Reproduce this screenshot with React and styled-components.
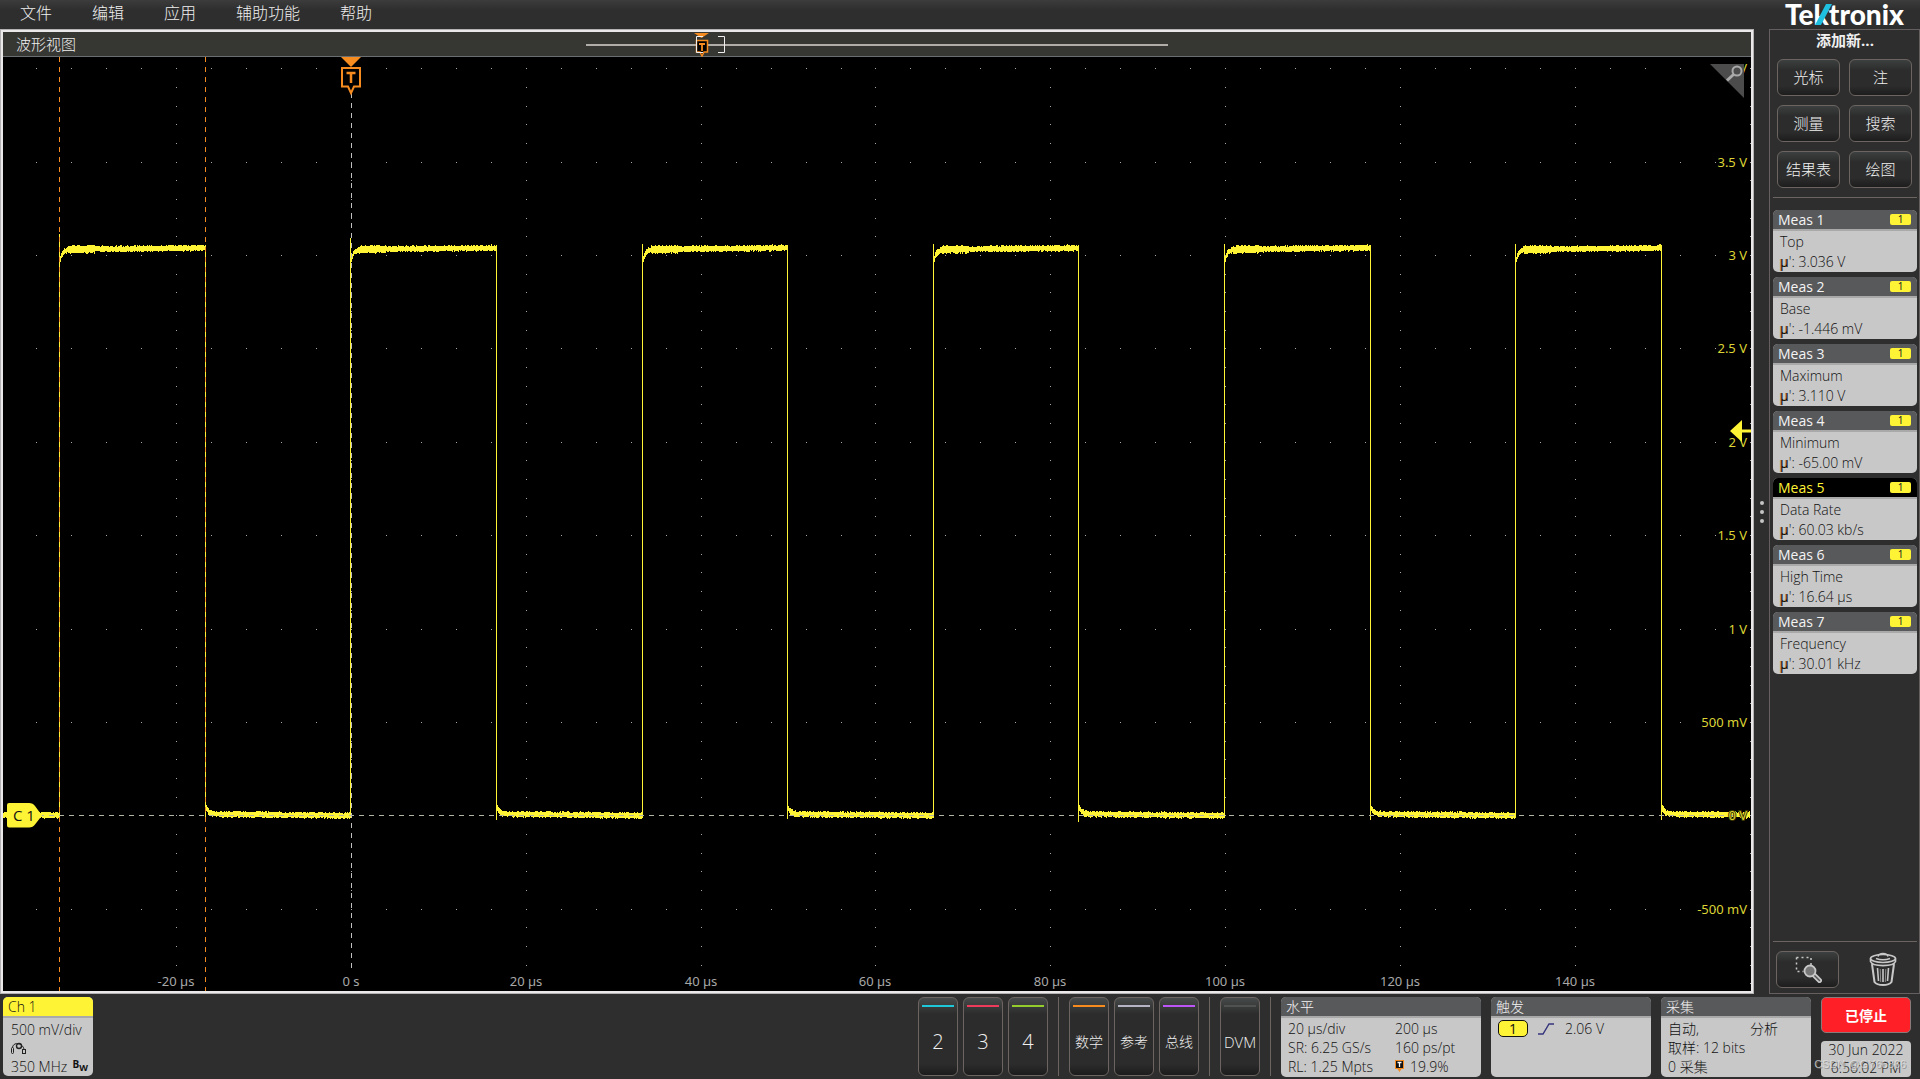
import React from 'react'
import styled, { createGlobalStyle } from 'styled-components'

const colors = {
  bg: '#2e2e2e',
  panel: '#363633',
  yellow: '#fff335',
  orange: '#f68b1f',
  card: '#c8c8c8',
  cardHeader: '#58595b',
  frame: '#6b6460',
}

const GlobalStyle = createGlobalStyle`
  * {
    box-sizing: border-box;
  }
  body {
    margin: 0;
    background: ${colors.bg};
    color: #f0f0f0;
    font-family: 'Open Sans', 'Noto Sans CJK SC', sans-serif;
    font-size: 14px;
    font-weight: 300;
  }
  button {
    font: inherit;
    color: inherit;
    cursor: pointer;
    padding: 0;
  }
`

const Page = styled.div`
  display: flex;
  flex-direction: column;
  min-height: 100vh;
`

const TopBar = styled.header`
  display: flex;
  justify-content: space-between;
  height: 29px;
  padding-right: 14px;
  background: linear-gradient(#3c3c3c, ${colors.bg} 10px);
`

const Menu = styled.nav`
  display: flex;
  gap: 8px;
  padding-left: 4px;
`

const MenuItem = styled.button`
  border: 0;
  background: none;
  padding: 0 16px 3px;
  font-size: 16px;
  line-height: 26px;
`

const Main = styled.main`
  display: flex;
  flex: 1;
`

const WaveView = styled.section`
  flex: 1;
  min-width: 0;
  background: #000;
  border: 3px solid #ebe8ea;
  outline: 1px solid #b5b2b4;
  outline-offset: -1px;
`

const WaveHeader = styled.div`
  display: grid;
  grid-template-columns: 33% 1fr;
  height: 25px;
  background: ${colors.panel};
  border-bottom: 1px solid #6a6e70;
`

const WaveTitle = styled.h1`
  margin: 0;
  padding-left: 13px;
  font-size: 15px;
  font-weight: 300;
  line-height: 25px;
`

const PlotArea = styled.div`
  position: relative;

  > svg {
    display: block;
    width: 100%;
    height: auto;
  }
`

const AxisText = styled.text`
  font-family: 'Noto Sans', sans-serif;
  font-size: 13px;
  font-weight: 400;
  fill: ${(props) => (props.$volt ? '#dcd334' : '#a8a8a8')};
`

const ZoomCorner = styled.button`
  position: absolute;
  top: 7px;
  right: 7px;
  border: 0;
  background: none;
  line-height: 0;
`

const Splitter = styled.div`
  display: flex;
  flex-direction: column;
  align-items: center;
  justify-content: center;
  gap: 5px;
  width: 15px;
`

const Dot = styled.span`
  width: 4px;
  height: 4px;
  border-radius: 50%;
  background: #c4c4c4;
`

const Sidebar = styled.aside`
  display: flex;
  flex-direction: column;
  width: 151px;
  padding: 0 2px 5px 3px;
  border: 1px solid #65605f;
`

const SideTitle = styled.h2`
  margin: 0 0 9px;
  font-size: 15px;
  font-weight: 700;
  line-height: 20px;
  text-align: center;
`

const ButtonGrid = styled.div`
  display: grid;
  grid-template-columns: 1fr 1fr;
  gap: 9px;
  padding: 0 5px 0 4px;
`

const PanelButton = styled.button`
  display: flex;
  align-items: center;
  justify-content: center;
  height: 37px;
  padding-bottom: 2px;
  border: 1px solid ${colors.frame};
  border-radius: 6px;
  background: linear-gradient(#3d4040, #2c2c2c 10px, #2c2c2c 26px, #1d1d1d);
  font-size: 15px;
`

const Rule = styled.hr`
  width: 100%;
  height: 1px;
  margin: ${(props) => props.$margin};
  border: 0;
  background: ${colors.frame};
`

const MeasList = styled.div`
  display: flex;
  flex-direction: column;
  gap: 5px;
`

const Card = styled.section`
  width: ${(props) => props.$width ?? 'auto'};
  border-radius: 5px;
  overflow: hidden;
  background: ${colors.card};
  color: #111;
`

const CardHeader = styled.div`
  display: flex;
  align-items: center;
  justify-content: space-between;
  height: 21px;
  padding: 0 6px 0 5px;
  border-bottom: 2px solid #a9a9a9;
  background: ${(props) => props.$bg ?? colors.cardHeader};
  color: ${(props) => props.$color ?? '#f4f4f4'};
  line-height: 19px;
`

const MeasHeader = styled(CardHeader)`
  font-weight: 400;
`

const MeasBody = styled.div`
  padding: 1px 7px 0;
  height: 41px;
  line-height: 20px;
`

const Mu = styled.b`
  font-family: 'Noto Sans', sans-serif;
  font-weight: 400;
  text-shadow: -1px 0 rgba(200, 110, 20, 0.7);
`

const SourceBadge = styled.span`
  width: 21px;
  height: 11px;
  border-radius: 2px;
  background: ${colors.yellow};
  color: #222;
  font-family: 'Noto Sans', sans-serif;
  font-size: 10px;
  line-height: 11px;
  text-align: center;
`

const SideTools = styled.div`
  display: grid;
  grid-template-columns: 63px 1fr;
  padding-left: 3px;
`

const TrashButton = styled.button`
  justify-self: center;
  border: 0;
  margin-left: 9px;
  background: none;
  line-height: 0;
`

const BottomBar = styled.footer`
  position: relative;
  display: flex;
  align-items: flex-start;
  height: 85px;
  padding: 3px 9px 0 3px;
`

const Group = styled.div`
  display: flex;
  gap: 5px;
  height: 79px;
  padding: 0 10px;
  border-right: 1px solid ${colors.frame};
`

const SettingsBar = styled.div`
  display: flex;
  margin-left: auto;
`

const SlotButton = styled.button`
  display: flex;
  flex-direction: column;
  align-items: center;
  width: 40px;
  border: 1px solid ${colors.frame};
  border-radius: 6px;
  background: linear-gradient(#474a4a, #2c2c2c 16px, #2c2c2c 66px, #1c1c1c);
  font-size: ${(props) => props.$size ?? '14px'};
  line-height: 70px;
  white-space: nowrap;

  &::before {
    content: '';
    flex: none;
    width: 32px;
    height: 2px;
    margin-top: 7px;
    background: ${(props) => props.$color};
  }
`

const SettingCards = styled.div`
  display: flex;
  gap: 10px;
  padding-left: 10px;
`

const CardBody = styled.div`
  display: grid;
  grid-template-columns: ${(props) => props.$columns ?? '1fr'};
  align-content: start;
  height: 58px;
  padding: 1px 7px 0;
  line-height: 19px;
`

const WideCell = styled.span`
  grid-column: 1 / -1;
`

const WithIcon = styled.span`
  display: flex;
  align-items: center;
  gap: ${(props) => props.$gap};
`

const ChannelBody = styled.div`
  display: flex;
  flex-direction: column;
  justify-content: space-between;
  height: 58px;
  padding: 3px 5px 0 8px;
  line-height: 18px;
`

const ChannelLine = styled.div`
  display: flex;
  justify-content: space-between;
  white-space: nowrap;
`

const Bandwidth = styled.b`
  font-size: 10px;
  font-weight: 700;
  line-height: 12px;

  sub {
    font-size: 9px;
    line-height: 0;
  }
`

const TriggerBadge = styled.span`
  width: 30px;
  height: 17px;
  border: 1px solid #111;
  border-radius: 5px;
  background: ${colors.yellow};
  font-weight: 400;
  line-height: 15px;
  text-align: center;
`

const StatusColumn = styled.div`
  display: grid;
  gap: 8px;
  width: 90px;
  margin-left: 10px;
`

const RunButton = styled.button`
  height: 36px;
  border: 1px solid #8a7a7a;
  border-radius: 5px;
  background: #ff2027;
  color: #fff;
  font-size: 14px;
  font-weight: 700;
`

const Clock = styled.time`
  height: 36px;
  border-radius: 4px;
  background: ${colors.card};
  color: #111;
  line-height: 18px;
  text-align: center;
`

const Watermark = styled.span`
  position: absolute;
  right: 14px;
  bottom: 8px;
  color: rgba(225, 225, 225, 0.75);
  font: 400 11px/14px 'Liberation Sans', sans-serif;
  text-shadow: 1px 1px rgba(110, 110, 110, 0.6);
`

// plot scales, in viewBox units
const PLOT_W = 1748
const PLOT_H = 934
const timeX = (us) => Math.round(347.9 + us * 8.743)
const voltY = (v) => Math.round(758.2 - v * 186.7)

const random = (seed) => {
  let s = seed
  return () => {
    s = (s * 16807) % 2147483647
    return s / 2147483647
  }
}

const gridDots = () => {
  let d = ''
  for (let v = -0.5; v <= 4; v += 0.5) {
    if (v === 0) continue
    for (let us = -36; us <= 160; us += 4) {
      d += `M${timeX(us)} ${voltY(v)}h1`
    }
  }
  for (let us = -20; us <= 160; us += 20) {
    for (let i = us === 160 ? -9 : -8; i <= 40; i++) {
      d += `M${timeX(us)} ${voltY(i / 10)}h1`
    }
  }
  return d
}

const tracePath = () => {
  const next = random(42)
  const edges = []
  for (let k = -2; k < 10; k++) {
    edges.push({
      x: Math.floor(347.9 + k * 145.6),
      rising: k % 2 === 0,
      peak: k === -2 ? 177 : k === 0 ? 181 : 187,
    })
  }
  let d = ''
  let edge = null
  let e = 0
  for (let x = 0; x < PLOT_W - 1; x++) {
    if (e < edges.length && x === edges[e].x) {
      edge = edges[e++]
      d += edge.rising ? `M${x} ${edge.peak}V761` : `M${x} 188V${762 + Math.round(next() * 3)}`
      continue
    }
    const age = edge ? x - edge.x : 99
    const high = edge?.rising
    const settle = Math.exp(-age / 2.5)
    const center = high ? 192.5 - age / 90 + settle * 14 : 757 + Math.min(age, 140) / 90 - settle * 9
    const half = 2 + (high && age > 8 && age < 36 ? 1 : 0)
    const top = Math.round(center - half - next() * 1.6)
    const bottom = Math.round(center + half + next() * 1.6)
    d += `M${x} ${top}V${bottom}`
  }
  return d
}

const DOTS = gridDots()
const TRACE = tracePath()

const voltLabels = [
  [4, '4 V'],
  [3.5, '3.5 V'],
  [3, '3 V'],
  [2.5, '2.5 V'],
  [2, '2 V'],
  [1.5, '1.5 V'],
  [1, '1 V'],
  [0.5, '500 mV'],
  [0, '0 V'],
  [-0.5, '-500 mV'],
]

const timeLabels = [-20, 0, 20, 40, 60, 80, 100, 120, 140]

const Plot = () => (
  <svg viewBox={`0 0 ${PLOT_W} ${PLOT_H}`} role="img" aria-label="Ch 1">
    <g fill="none" shapeRendering="crispEdges">
      <path d={DOTS} stroke="#a8a8a8" transform="translate(0 .5)" />
      <path d={TRACE} stroke={colors.yellow} transform="translate(.5 0)" />
      <path d="M56.5 0V934M202.5 0V934" stroke={colors.orange} strokeDasharray="5 5" />
      <path d="M348.5 36V911" stroke="#c0c0c0" strokeDasharray="5 5" />
      <path d="M36 758.5H1744" stroke="#b4b4a4" strokeDasharray="5 5" />
    </g>
    {voltLabels.map(([v, label]) => (
      <AxisText
        key={label}
        $volt
        x={1744}
        y={voltY(v) + 5}
        textAnchor="end"
        stroke={v === 0 ? '#3a3800' : 'none'}
        strokeWidth="2"
        paintOrder="stroke"
      >
        {label}
      </AxisText>
    ))}
    {timeLabels.map((us) => (
      <AxisText key={us} x={timeX(us)} y={929} textAnchor="middle">
        {us === 0 ? '0 s' : `${us} µs`}
      </AxisText>
    ))}
    <path d="M338 0h20l-10 10z" fill={colors.orange} />
    <path
      d="M339 11h18v18.500h-6l-3 6.500l-3-6.500h-6z"
      fill="#000"
      stroke={colors.orange}
      strokeWidth="2"
    />
    <path d="M343.500 16h9M348 16v10" stroke={colors.orange} strokeWidth="2.500" />
    <path d="M1727 374l12-11v9.500h9v3h-9v9.500z" fill={colors.yellow} />
    <path d="M6 746h20q4 0 6 3l7 9.500l-7 9q-2 3-6 3H6q-2 0-2-2V748q0-2 2-2z" fill={colors.yellow} />
    <text x="10" y="764" fontSize="15" fontWeight="400" fill="#111">
      C 1
    </text>
  </svg>
)

const Overview = () => (
  <svg width="600" height="25" fill="none">
    <path d="M6 13h582" stroke="#b0aca8" strokeWidth="2" />
    <path d="M114 1h15l-7.500 5z" fill={colors.orange} />
    <path d="M116.500 8.500h11v11.500h-3.500l-2 4l-2-4h-3.500z" fill="#000" stroke={colors.orange} strokeWidth="1.500" />
    <path d="M119 12h6M122 12v7" stroke={colors.orange} strokeWidth="1.800" />
    <path d="M123 4.500h-6.500v16h6.500M138 4.500h6.500v16h-6.500" stroke="#eee" />
  </svg>
)

const Logo = () => (
  <svg width="122" height="29" overflow="visible" role="img" aria-label="Tektronix">
    <text x="1" y="25" fontFamily="Lato" fontWeight="900" fontSize="28" fill="#fff">
      Tektronix
    </text>
    <path d="M42 4h6L37 25h-6z" fill="#1fbfe0" />
  </svg>
)

const CornerIcon = () => (
  <svg width="34" height="34" fill="none">
    <path d="M0 0h34v34z" fill="#4c4c4c" />
    <circle cx="27" cy="7" r="4.500" stroke="#aaa" strokeWidth="2" />
    <path d="M23.500 10.500L17 16.500" stroke="#aaa" strokeWidth="3" />
  </svg>
)

const ZoomAreaIcon = () => (
  <svg width="28" height="28" fill="none">
    <path d="M2.500 2.500h14.500v8M2.500 2.500v14h7" stroke="#c8c8c8" strokeWidth="1.500" strokeDasharray="2 3" />
    <path d="M20.500 20.500l5 5" stroke="#c8c8c8" strokeWidth="5" strokeLinecap="round" />
    <path d="M20.500 20.500l5 5" stroke="#555" strokeWidth="1.500" strokeLinecap="round" />
    <circle cx="16" cy="16" r="5.500" fill="#777" stroke="#c8c8c8" strokeWidth="1.800" />
  </svg>
)

const TrashIcon = () => (
  <svg width="30" height="36" fill="none" stroke="#c8c8c8" strokeWidth="1.600">
    <ellipse cx="15" cy="6.500" rx="12.500" ry="4" />
    <path d="M2.500 6.500v3c2 5.500 23 5.500 25 0v-3" />
    <path d="M10 4.500c1-4 9-4 10 0M8 6.500c4 1.500 10 1.500 14 0" />
    <path d="M4 12l2.500 18c3 4 14 4 17 0L26 12" strokeWidth="2" />
    <path d="M9.500 16l1 13M15 17v13M20.500 16l-1 13" />
    <path d="M12.200 17l.5 13M17.800 17l-.5 13" strokeWidth="1" opacity=".6" />
  </svg>
)

const ProbeIcon = () => (
  <svg width="16" height="13" fill="none" stroke="#222">
    <rect x=".5" y="5.500" width="2" height="6" rx="1" />
    <rect x="11.500" y="7.500" width="3" height="4" />
    <path d="M1.500 5.500C2 0 11 0 13 7" />
    <circle cx="8" cy="4" r="2.500" strokeWidth="1.400" />
  </svg>
)

const SlopeIcon = () => (
  <svg width="17" height="12" fill="none" stroke="#34347c" strokeWidth="1.400">
    <path d="M0 11h5L11 1h5" />
  </svg>
)

const TriggerIcon = () => (
  <svg width="9" height="13" fill="none">
    <path d="M0 0h9v9H6.500L4.500 12L2.500 9H0z" fill={colors.orange} />
    <path d="M1 1h7v7H1z" fill="#111" />
    <path d="M2.500 2.500h4M4.500 2v5" stroke="#fff" strokeWidth="1.300" />
  </svg>
)

const measurements = [
  ['Top', '3.036 V'],
  ['Base', '-1.446 mV'],
  ['Maximum', '3.110 V'],
  ['Minimum', '-65.00 mV'],
  ['Data Rate', '60.03 kb/s'],
  ['High Time', '16.64 µs'],
  ['Frequency', '30.01 kHz'],
]

const Measurement = ({ index, name, value, selected }) => (
  <Card>
    <MeasHeader
      $bg={selected ? '#000' : undefined}
      $color={selected ? colors.yellow : undefined}
    >
      Meas {index}
      <SourceBadge>1</SourceBadge>
    </MeasHeader>
    <MeasBody>
      {name}
      <br />
      <Mu>µ</Mu>&#39;: {value}
    </MeasBody>
  </Card>
)

const App = () => (
  <Page>
    <GlobalStyle />
    <TopBar>
      <Menu>
        {['文件', '编辑', '应用', '辅助功能', '帮助'].map((item) => (
          <MenuItem key={item}>{item}</MenuItem>
        ))}
      </Menu>
      <Logo />
    </TopBar>

    <Main>
      <WaveView>
        <WaveHeader>
          <WaveTitle>波形视图</WaveTitle>
          <Overview />
        </WaveHeader>
        <PlotArea>
          <Plot />
          <ZoomCorner aria-label="缩放">
            <CornerIcon />
          </ZoomCorner>
        </PlotArea>
      </WaveView>
      <Splitter>
        <Dot />
        <Dot />
        <Dot />
      </Splitter>
      <Sidebar>
        <SideTitle>添加新...</SideTitle>
        <ButtonGrid>
          {['光标', '注', '测量', '搜索', '结果表', '绘图'].map((label) => (
            <PanelButton key={label}>{label}</PanelButton>
          ))}
        </ButtonGrid>
        <Rule $margin="9px 0 12px" />
        <MeasList>
          {measurements.map(([name, value], i) => (
            <Measurement key={name} index={i + 1} name={name} value={value} selected={i === 4} />
          ))}
        </MeasList>
        <Rule $margin="auto 0 9px" />
        <SideTools>
          <PanelButton aria-label="缩放">
            <ZoomAreaIcon />
          </PanelButton>
          <TrashButton aria-label="删除">
            <TrashIcon />
          </TrashButton>
        </SideTools>
      </Sidebar>
    </Main>

    <BottomBar>
      <Card $width="90px">
        <CardHeader $bg={colors.yellow} $color="#111">
          Ch 1
        </CardHeader>
        <ChannelBody>
          <span>500 mV/div</span>
          <ProbeIcon />
          <ChannelLine>
            350 MHz
            <Bandwidth>
              B<sub>W</sub>
            </Bandwidth>
          </ChannelLine>
        </ChannelBody>
      </Card>
      <SettingsBar>
        <Group>
          <SlotButton $color="#1fc8d8" $size="20px">2</SlotButton>
          <SlotButton $color="#ee3b5b" $size="20px">3</SlotButton>
          <SlotButton $color="#93cc2c" $size="20px">4</SlotButton>
        </Group>
        <Group>
          <SlotButton $color={colors.orange}>数学</SlotButton>
          <SlotButton $color="#b4b4c4">参考</SlotButton>
          <SlotButton $color="#bb55f5">总线</SlotButton>
        </Group>
        <Group>
          <SlotButton $color="#505252" $size="15px">DVM</SlotButton>
        </Group>
        <SettingCards>
          <Card $width="200px">
            <CardHeader>水平</CardHeader>
            <CardBody $columns="107px 1fr">
              <span>20 µs/div</span>
              <span>200 µs</span>
              <span>SR: 6.25 GS/s</span>
              <span>160 ps/pt</span>
              <span>RL: 1.25 Mpts</span>
              <WithIcon $gap="6px">
                <TriggerIcon />
                19.9%
              </WithIcon>
            </CardBody>
          </Card>
          <Card $width="160px">
            <CardHeader>触发</CardHeader>
            <CardBody>
              <WithIcon $gap="10px">
                <TriggerBadge>1</TriggerBadge>
                <SlopeIcon />
                2.06 V
              </WithIcon>
            </CardBody>
          </Card>
          <Card $width="150px">
            <CardHeader>采集</CardHeader>
            <CardBody $columns="82px 1fr">
              <span>自动,</span>
              <span>分析</span>
              <WideCell>取样: 12 bits</WideCell>
              <WideCell>0 采集</WideCell>
            </CardBody>
          </Card>
        </SettingCards>
        <StatusColumn>
          <RunButton>已停止</RunButton>
          <Clock>
            30 Jun 2022
            <br />
            6:56:02 PM
          </Clock>
        </StatusColumn>
      </SettingsBar>
      <Watermark>CSDN @GY66866</Watermark>
    </BottomBar>
  </Page>
)

export default App
